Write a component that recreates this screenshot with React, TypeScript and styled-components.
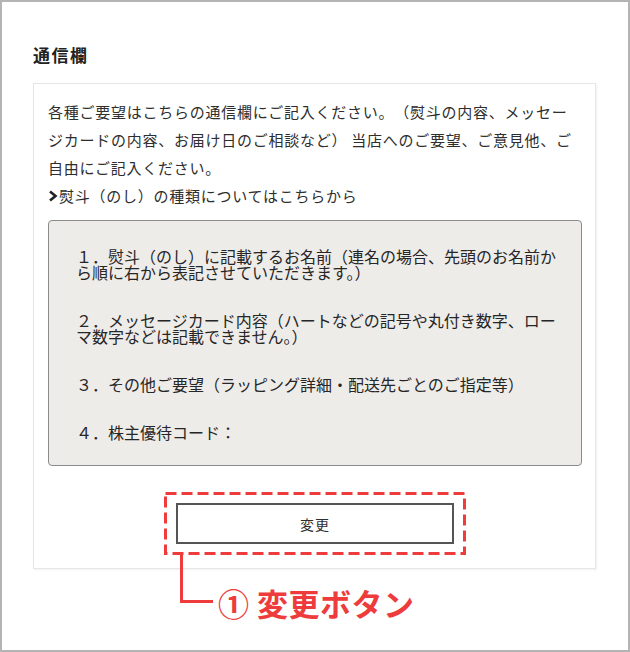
import React from 'react';
import styled, { createGlobalStyle } from 'styled-components';

const RED = '#ee3c3c';

const GlobalStyle = createGlobalStyle`
	html,
	body {
		margin: 0;
		padding: 0;
		background: #fff;
	}
	body {
		font-family: 'Noto Sans CJK JP', 'Noto Sans', sans-serif;
		color: #333;
	}
`;

const noteItems = [
	'１．熨斗（のし）に記載するお名前（連名の場合、先頭のお名前から順に右から表記させていただきます。）',
	'２．メッセージカード内容（ハートなどの記号や丸付き数字、ローマ数字などは記載できません。）',
	'３．その他ご要望（ラッピング詳細・配送先ごとのご指定等）',
	'４．株主優待コード：',
];

const App: React.FC = () => {
	return (
		<>
			<GlobalStyle />
			<Frame>
				<Title>通信欄</Title>
				<Panel>
					<Lead>
						各種ご要望はこちらの通信欄にご記入ください。（熨斗の内容、メッセージカードの内容、お届け日のご相談など） 当店へのご要望、ご意見他、ご自由にご記入ください。
					</Lead>
					<LinkLine>
						<svg width="10" height="12" viewBox="0 0 10 12">
							<polyline points="2,1.5 7.5,6 2,10.5" fill="none" stroke="#222" strokeWidth="2.6" />
						</svg>
						熨斗（のし）の種類についてはこちらから
					</LinkLine>
					<NoteBox>{noteItems.join('\n\n\n')}</NoteBox>
					<Highlight>
						<DashedOutline width="302" height="63" viewBox="0 0 302 63">
							<rect
								x="1.5"
								y="1.5"
								width="299"
								height="60"
								fill="none"
								stroke={RED}
								strokeWidth="3"
								strokeDasharray="11 5"
							/>
						</DashedOutline>
						<ChangeButton type="button">変更</ChangeButton>
						<Callout>
							<Elbow />
							<CalloutLabel>① 変更ボタン</CalloutLabel>
						</Callout>
					</Highlight>
				</Panel>
			</Frame>
		</>
	);
};
export default App;

const Frame = styled.div`
	box-sizing: border-box;
	width: 630px;
	height: 652px;
	border: 2px solid #b4b4b4;
	padding: 40px 32px 0 31px;
	background: #fff;
`;

const Title = styled.h2`
	margin: 0 0 16px;
	font-size: 17px;
	line-height: 25px;
	font-weight: 700;
	letter-spacing: 1.5px;
	color: #222;
`;

const Panel = styled.section`
	display: flex;
	flex-direction: column;
	border: 1px solid #e6e6e6;
	box-shadow: 1px 1px 2px rgba(0, 0, 0, 0.06);
	padding: 14px 13px 13px 14px;
`;

const Lead = styled.p`
	margin: 0;
	padding-right: 6px;
	font-size: 15px;
	line-height: 28px;
	letter-spacing: 0.75px;
	color: #2e2e2e;
	text-spacing-trim: space-all;
`;

const LinkLine = styled.p`
	display: flex;
	align-items: center;
	gap: 1px;
	margin: 0;
	font-size: 15px;
	line-height: 28px;
	letter-spacing: 0.75px;
	color: #2e2e2e;
	text-spacing-trim: space-all;
`;

const NoteBox = styled.div`
	box-sizing: border-box;
	height: 246px;
	margin-top: 10px;
	padding: 27px 17px 0 27px;
	background: #eeece9;
	border: 1px solid #8b8b8b;
	border-radius: 4px;
	font-size: 16px;
	line-height: 16px;
	color: #262626;
	white-space: pre-wrap;
`;

const Highlight = styled.div`
	position: relative;
	align-self: center;
	margin-top: 26px;
	padding: 11px 12px;
`;

const DashedOutline = styled.svg`
	position: absolute;
	top: 0;
	left: 0;
	display: block;
`;

const ChangeButton = styled.button`
	display: block;
	box-sizing: border-box;
	width: 278px;
	height: 41px;
	padding: 0;
	background: #fff;
	border: 2px solid #555;
	font-family: inherit;
	font-size: 14px;
	color: #2e2e2e;
	letter-spacing: 1px;
	cursor: pointer;
`;

const Callout = styled.div`
	position: absolute;
	top: 100%;
	left: 16px;
	display: flex;
	align-items: flex-start;
`;

const Elbow = styled.div`
	box-sizing: border-box;
	width: 33px;
	height: 48px;
	border-left: 3px solid ${RED};
	border-bottom: 3px solid ${RED};
`;

const CalloutLabel = styled.span`
	margin: 32px 0 0 5px;
	font-size: 31px;
	line-height: 31px;
	font-weight: 700;
	letter-spacing: 0.5px;
	color: ${RED};
	white-space: nowrap;
`;
